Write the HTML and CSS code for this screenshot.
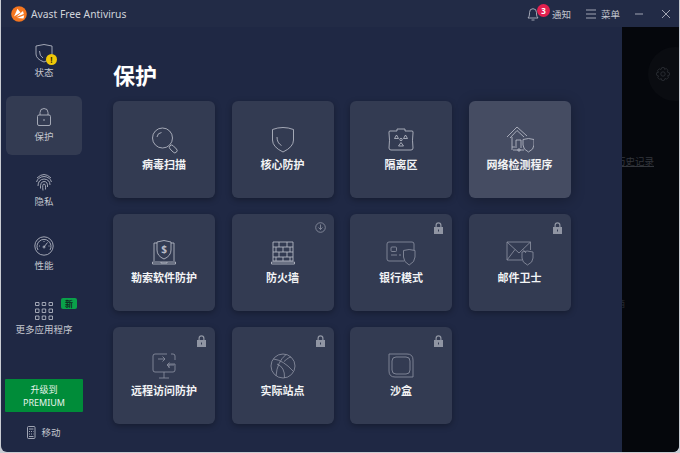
FILE: index.html
```html
<!DOCTYPE html>
<html lang="zh-CN">
<head>
    <meta charset="UTF-8">
    <title>Avast Free Antivirus</title>
    <link rel="stylesheet" href="styles.css">
</head>
<body>
    <div class="window">
        <header class="titlebar">
            <svg class="logo" width="16" height="16" viewBox="0 0 16 16">
                <circle cx="8" cy="8" r="7.8" fill="#f5761f"/>
                <path d="M3 10.500 L6.500 2.800 L9.500 6.500 Z M5 11 L12 5 L12.800 8 Z M6 12 L13.200 9.200 L12.500 12.500 Z" fill="#fff"/>
            </svg>
            <span class="app-name">Avast Free Antivirus</span>
            <div class="bar-actions">
                <div class="notify">
                    <svg class="line" width="14" height="16" viewBox="0 0 14 16">
                        <path d="M2 12 Q3.500 10.500 3.500 8 V6.500 A3.500 3.800 0 0 1 10.500 6.500 V8 Q10.500 10.500 12 12 Z M5.500 14 H8.500"/>
                    </svg>
                    <span class="notify-count">3</span>
                    <span class="bar-label">通知</span>
                </div>
                <div class="menu">
                    <svg class="line" width="10" height="10" viewBox="0 0 10 10">
                        <path d="M0 1 H10 M0 5 H10 M0 9 H10"/>
                    </svg>
                    <span class="bar-label">菜单</span>
                </div>
                <svg class="line win-btn" width="9" height="10" viewBox="0 0 9 10"><path d="M0 5 H8"/></svg>
                <svg class="line win-btn" width="10" height="10" viewBox="0 0 10 10"><path d="M1 1 L9 9 M9 1 L1 9"/></svg>
            </div>
        </header>

        <div class="main">
            <nav class="sidebar">
                <div class="nav-item">
                    <svg class="line" width="20" height="20" viewBox="0 0 20 20">
                        <path d="M2 3 Q10 0 18 3 V11 Q18 16 10 19 Q2 16 2 11 Z M5.500 8 Q5.500 13 9 15"/>
                    </svg>
                    <span class="warn-badge">!</span>
                    <span class="nav-label">状态</span>
                </div>
                <div class="nav-item active">
                    <svg class="line" width="20" height="20" viewBox="0 0 20 20">
                        <rect x="3.500" y="8" width="13" height="10.500" rx="1.500"/>
                        <path d="M6 8 V5.500 A4 4 0 0 1 14 5.500 V8 M10 12 V14"/>
                    </svg>
                    <span class="nav-label">保护</span>
                </div>
                <div class="nav-item">
                    <svg class="line" width="20" height="20" viewBox="0 0 20 20">
                        <path d="M3 6 Q10 -1 17 6 M2.500 10 Q4 5 10 4.500 Q16 5 17.500 10 M4 14 Q4 7.500 10 7 Q16 7.500 16 13 M6.500 16.500 Q6 9.500 10 9.500 Q14 9.500 13.500 15 M9 18.500 Q8 12 10 12 Q12 12 11.500 17.500"/>
                    </svg>
                    <span class="nav-label">隐私</span>
                </div>
                <div class="nav-item">
                    <svg class="line" width="20" height="20" viewBox="0 0 20 20">
                        <circle cx="10" cy="10" r="9.200"/>
                        <path d="M4 14 A7 7 0 1 1 16 14 M10 11 L13.500 6.500 M10 5 V6 M5 10 H6 M14.500 10 H15.500"/>
                        <circle cx="10" cy="11" r="1"/>
                    </svg>
                    <span class="nav-label">性能</span>
                </div>
                <div class="nav-item">
                    <svg class="line" width="18" height="18" viewBox="0 0 18 18">
                        <path d="M.5 .5 H4 V3.500 H.5 Z M7.200 .5 H10.700 V3.500 H7.200 Z M14 .5 H17.500 V3.500 H14 Z M.5 7 H4 V10.500 H.5 Z M7.200 7 H10.700 V10.500 H7.200 Z M14 7 H17.500 V10.500 H14 Z M.5 14 H4 V17.500 H.5 Z M7.200 14 H10.700 V17.500 H7.200 Z M14 14 H17.500 V17.500 H14 Z"/>
                    </svg>
                    <span class="new-badge">新</span>
                    <span class="nav-label">更多应用程序</span>
                </div>
                <div class="upgrade">升级到<br>PREMIUM</div>
                <div class="mobile">
                    <svg class="line" width="9" height="13" viewBox="0 0 9 13">
                        <rect x=".5" y=".5" width="7.500" height="12" rx="1"/>
                        <path d="M2 3 H6.500 M2 5.500 H3 M4 5.500 H5 M6 5.500 H6.500 M2 8 H3 M4 8 H5 M6 8 H6.500 M2 10.500 H6.500"/>
                    </svg>
                    <span class="nav-label">移动</span>
                </div>
            </nav>

            <section class="content">
                <h1>保护</h1>
                <div class="cards">
                    <div class="card">
                        <svg class="line" width="28" height="28" viewBox="0 0 28 28">
                            <circle cx="12.500" cy="12" r="10"/>
                            <path d="M7 11 Q7.500 7 11.500 6.500"/>
                            <rect x="21" y="18.500" width="4.500" height="9" rx="2.200" transform="rotate(-45 23.200 23)"/>
                        </svg>
                        <span class="card-label">病毒扫描</span>
                    </div>
                    <div class="card">
                        <svg class="line" width="28" height="28" viewBox="0 0 28 28">
                            <path d="M3.500 3.500 Q14 -.5 24.500 3.500 V14 Q24.500 21 14 26 Q3.500 21 3.500 14 Z M8 11 Q8 17 12.500 19.500"/>
                        </svg>
                        <span class="card-label">核心防护</span>
                    </div>
                    <div class="card">
                        <svg class="line" width="28" height="28" viewBox="0 0 28 28">
                            <path d="M3 5 H10 V3 H18 V5 H25 Q26.500 5 26 7 Q25 14 26 22 Q26 24 24 24 H4 Q2 24 2 22 Q3 14 2 7 Q1.500 5 3 5 Z"/>
                            <path d="M7.500 12.500 L9.500 9 L11.500 12.500 Z M16.500 12.500 L18.500 9 L20.500 12.500 Z M11.500 20 L14 16.500 L16.500 20 Z"/>
                            <circle cx="14" cy="13.500" r="1.200"/>
                        </svg>
                        <span class="card-label">隔离区</span>
                    </div>
                    <div class="card hover">
                        <svg class="line" width="28" height="28" viewBox="0 0 28 28">
                            <path d="M1 11 L11 1 L21 10 M4 12 L11 4.500 L18 11 M6 11 V24 M11 21 H6 M10 14 H15 V22 M10 14 V20 M7 24 H18"/>
                            <circle cx="13" cy="24" r="1.200"/>
                            <path d="M17 13.500 Q22.500 11.500 28 13.500 V19 Q28 23.500 22.500 26 Q17 23.500 17 19 Z"/>
                        </svg>
                        <span class="card-label">网络检测程序</span>
                    </div>

                    <div class="card">
                        <svg class="line" width="28" height="28" viewBox="0 0 28 28">
                            <path d="M7 4 H4 V22 M21 4 H24 V22 M2.500 23 H25.500 V25 H2.500 Z M11 23 V24 H17 V23"/>
                            <path d="M7 3 Q14 0 21 3 V11 Q21 17 14 20 Q7 17 7 11 Z"/>
                            <text class="dollar" x="14" y="14">$</text>
                        </svg>
                        <span class="card-label">勒索软件防护</span>
                    </div>
                    <div class="card">
                        <svg class="line" width="28" height="28" viewBox="0 0 28 28">
                            <path d="M4 3 H24 V22 H4 Z M4 8 H24 M4 13 H24 M4 18 H24 M10 3 V8 M18 3 V8 M7 8 V13 M14 8 V13 M21 8 V13 M10 13 V18 M18 13 V18 M7 18 V22 M14 18 V22 M21 18 V22"/>
                            <path d="M2.500 23 H25.500 V25 H2.500 Z"/>
                        </svg>
                        <span class="card-label">防火墙</span>
                        <svg class="dim corner" width="11" height="11" viewBox="0 0 11 11">
                            <circle cx="5.500" cy="5.500" r="4.800"/>
                            <path d="M5.500 2.500 V7.500 M3.500 5.500 L5.500 7.500 L7.500 5.500"/>
                        </svg>
                    </div>
                    <div class="card">
                        <svg class="dim" width="30" height="28" viewBox="0 0 30 28">
                            <path d="M18 22 H3 Q1 22 1 20 V5 Q1 3 3 3 H26 Q28 3 28 5 V11"/>
                            <rect x="5" y="8" width="5.500" height="4.500" rx="1"/>
                            <path d="M5 16 H11 M13 16 H15"/>
                            <path d="M17.500 11.500 Q23 9.500 29 11.500 V18 Q29 23 23.200 26 Q17.500 23 17.500 18 Z"/>
                        </svg>
                        <span class="card-label">银行模式</span>
                        <svg class="lock-icon corner" width="11" height="12" viewBox="0 0 11 12"><path d="M1 5 H2.500 V3.500 A3 3.200 0 0 1 8.500 3.500 V5 H10 V12 H1 Z M3.700 5 H7.300 V3.500 A1.800 2 0 0 0 3.700 3.500 Z M5 7.500 V9.500 H6 V7.500 Z" fill-rule="evenodd"/></svg>
                    </div>
                    <div class="card">
                        <svg class="dim" width="28" height="28" viewBox="0 0 28 28">
                            <path d="M16 21 H1 V3 H24.500 V11 M1 3 L13 14 L24.500 3 M1 21 L9 10.500 M17 10.500 L20 14"/>
                            <path d="M16 13 Q21 11 27 13 V19 Q27 23.500 21.500 26 Q16 23.500 16 19 Z"/>
                        </svg>
                        <span class="card-label">邮件卫士</span>
                        <svg class="lock-icon corner" width="11" height="12" viewBox="0 0 11 12"><path d="M1 5 H2.500 V3.500 A3 3.200 0 0 1 8.500 3.500 V5 H10 V12 H1 Z M3.700 5 H7.300 V3.500 A1.800 2 0 0 0 3.700 3.500 Z M5 7.500 V9.500 H6 V7.500 Z" fill-rule="evenodd"/></svg>
                    </div>

                    <div class="card">
                        <svg class="dim" width="28" height="28" viewBox="0 0 28 28">
                            <path d="M17 2 H5 Q3 2 3 4 V18 Q3 20 5 20 H23 Q25 20 25 18 V12 H19 V16 M25 8 V4 Q25 2 23 2 H21 M14 20 V26 M9 26 H19"/>
                            <path d="M8 8 H15 M12.500 5.500 L15 8 L12.500 10.500 M24 14 H17 M19.500 11.500 L17 14 L19.500 16.500" transform="translate(0 -1)"/>
                        </svg>
                        <span class="card-label">远程访问防护</span>
                        <svg class="lock-icon corner" width="11" height="12" viewBox="0 0 11 12"><path d="M1 5 H2.500 V3.500 A3 3.200 0 0 1 8.500 3.500 V5 H10 V12 H1 Z M3.700 5 H7.300 V3.500 A1.800 2 0 0 0 3.700 3.500 Z M5 7.500 V9.500 H6 V7.500 Z" fill-rule="evenodd"/></svg>
                    </div>
                    <div class="card">
                        <svg class="dim" width="28" height="28" viewBox="0 0 28 28">
                            <circle cx="14" cy="14" r="12"/>
                            <path d="M4.500 7 Q14 8 24 19 M17 2.500 Q8 10 7 24 M8 12 Q16 15 15.500 26 M15 9.500 Q20 5 22 5"/>
                        </svg>
                        <span class="card-label">实际站点</span>
                        <svg class="lock-icon corner" width="11" height="12" viewBox="0 0 11 12"><path d="M1 5 H2.500 V3.500 A3 3.200 0 0 1 8.500 3.500 V5 H10 V12 H1 Z M3.700 5 H7.300 V3.500 A1.800 2 0 0 0 3.700 3.500 Z M5 7.500 V9.500 H6 V7.500 Z" fill-rule="evenodd"/></svg>
                    </div>
                    <div class="card">
                        <svg class="dim" width="28" height="28" viewBox="0 0 28 28">
                            <path d="M2 2 H20 Q26 2 26 8 V25 H8 Q2 25 2 19 Z"/>
                            <rect x="5" y="5" width="18" height="17" rx="4"/>
                        </svg>
                        <span class="card-label">沙盒</span>
                        <svg class="lock-icon corner" width="11" height="12" viewBox="0 0 11 12"><path d="M1 5 H2.500 V3.500 A3 3.200 0 0 1 8.500 3.500 V5 H10 V12 H1 Z M3.700 5 H7.300 V3.500 A1.800 2 0 0 0 3.700 3.500 Z M5 7.500 V9.500 H6 V7.500 Z" fill-rule="evenodd"/></svg>
                    </div>
                </div>
            </section>

            <aside class="side-panel">
                <div class="gear-circle">
                    <svg class="gear" width="14" height="14" viewBox="0 0 14 14">
                        <circle cx="7" cy="7" r="2.200"/>
                        <path d="M5.800 .6 H8.200 L8.600 2.400 L10.200 1.500 L12 3.300 L11.200 4.900 L13.400 5.800 V8.200 L11.600 8.700 L12.400 10.400 L10.600 12.200 L9 11.400 L8.200 13.400 H5.800 L5.300 11.600 L3.600 12.400 L1.800 10.600 L2.600 9 L.6 8.200 V5.800 L2.400 5.300 L1.600 3.600 L3.400 1.800 L5 2.600 Z"/>
                    </svg>
                </div>
                <a class="history">历史记录</a>
                <span class="clipped">箱</span>
            </aside>
        </div>
    </div>
</body>
</html>
```

FILE: styles.css
```css
html, body {
    margin: 0;
    height: 100%;
}
body {
    background-color: #c9ccd3;
    font-family: "Noto Sans", "Noto Sans CJK SC", sans-serif;
    overflow: hidden;
}
.window {
    height: 452px;
    margin: 0 1px;
    display: flex;
    flex-direction: column;
    background-color: #1f2844;
    border-radius: 0 0 6px 6px;
    overflow: hidden;
    color: #c4c7cf;
}
svg {
    display: block;
    flex: none;
}
.line, .dim, .gear {
    fill: none;
    stroke-width: 0.85;
}
.line {
    stroke: #b8bcc7;
}
.dim {
    stroke: #8a8f9f;
}

/* title bar */
.titlebar {
    height: 27px;
    flex: none;
    display: flex;
    align-items: center;
    padding-left: 10px;
    background-color: #222b46;
}
.logo {
    margin-right: 4px;
}
.app-name {
    font-size: 10.300px;
    color: #d0d3da;
}
.bar-actions {
    margin-left: auto;
    display: flex;
    align-items: center;
}
.notify, .menu {
    display: flex;
    align-items: center;
    position: relative;
}
.notify {
    margin-right: 15px;
}
.menu {
    margin-right: 15px;
}
.menu .line {
    margin-right: 5px;
}
.notify .line {
    margin-right: 12px;
}
.bar-label {
    font-size: 9.500px;
}
.notify-count {
    position: absolute;
    left: 11px;
    top: -2px;
    width: 13px;
    height: 13px;
    border-radius: 50%;
    background-color: #e3204f;
    color: #fff;
    font-size: 8px;
    font-weight: 700;
    line-height: 13px;
    text-align: center;
}
.win-btn {
    margin-right: 12px;
}
.win-btn:last-child {
    margin-left: 5px;
    margin-right: 8px;
}

/* sidebar */
.main {
    flex: 1;
    display: flex;
    min-height: 0;
}
.sidebar {
    width: 86px;
    flex: none;
    display: flex;
    flex-direction: column;
    align-items: center;
    padding: 4.500px 0 0;
    box-sizing: border-box;
    gap: 5.500px;
}
.nav-item {
    position: relative;
    width: 76px;
    height: 59px;
    display: flex;
    flex-direction: column;
    align-items: center;
    justify-content: center;
    gap: 3px;
    border-radius: 6px;
}
.nav-item.active {
    background-color: #333b52;
}
.nav-label {
    font-size: 9.500px;
    line-height: 14px;
    white-space: nowrap;
}
.warn-badge {
    position: absolute;
    left: 40px;
    top: 22px;
    width: 11px;
    height: 11px;
    border-radius: 50%;
    background-color: #f0c808;
    color: #3a3000;
    font-size: 8px;
    font-weight: 700;
    line-height: 11px;
    text-align: center;
}
.new-badge {
    position: absolute;
    left: 55px;
    top: 8px;
    width: 16px;
    height: 11px;
    border-radius: 2px;
    background-color: #0aa14a;
    color: #0f2a22;
    font-size: 8px;
    font-weight: 700;
    line-height: 11px;
    text-align: center;
}
.upgrade {
    width: 78px;
    height: 33px;
    margin-top: 24.500px;
    background-color: #008c39;
    border-radius: 1px;
    color: #e8f3ec;
    font-size: 9px;
    line-height: 13px;
    text-align: center;
    padding-top: 4px;
    box-sizing: border-box;
}
.mobile {
    display: flex;
    align-items: center;
    gap: 5px;
    margin-top: 8.500px;
}

/* protection cards */
.content {
    flex: 1;
    padding-left: 26px;
    min-width: 0;
}
h1 {
    margin: 0;
    padding-top: 31px;
    height: 43px;
    font-size: 22px;
    line-height: 34px;
    font-weight: 700;
    color: #fff;
    box-sizing: content-box;
}
.cards {
    display: grid;
    grid-template-columns: repeat(4, 102px);
    grid-auto-rows: 97px;
    column-gap: 16.500px;
    row-gap: 16px;
}
.card {
    position: relative;
    display: flex;
    flex-direction: column;
    align-items: center;
    padding-top: 25px;
    gap: 3px;
    box-sizing: border-box;
    background-color: #333b52;
    border-radius: 6px;
    box-shadow: 0 2px 6px rgba(0, 0, 0, 0.3);
}
.card.hover {
    background-color: #454c62;
    box-shadow: 0 2px 14px rgba(0, 0, 0, 0.3);
}
.card-label {
    font-size: 11px;
    line-height: 16px;
    font-weight: 700;
    color: #f2f3f5;
    white-space: nowrap;
}
.corner {
    position: absolute;
    top: 8px;
    right: 8px;
}
.lock-icon {
    fill: #9095a3;
}
.dollar {
    fill: #b8bcc7;
    stroke: none;
    font-size: 10px;
    font-weight: 700;
    text-anchor: middle;
}

/* dimmed panel on the right */
.side-panel {
    width: 57px;
    flex: none;
    background-color: #05070c;
    overflow: hidden;
    display: flex;
    flex-direction: column;
    align-items: flex-start;
}
.gear-circle {
    width: 54px;
    height: 54px;
    flex: none;
    box-sizing: border-box;
    margin: 20px 0 0 26px;
    padding-left: 8px;
    border-radius: 50%;
    background-color: #0a0c11;
    display: flex;
    align-items: center;
}
.gear {
    stroke: #2c2f35;
}
.history {
    margin: 54px 0 0 -6px;
    font-size: 9.500px;
    line-height: 14px;
    color: #33363c;
    text-decoration: underline;
    white-space: nowrap;
}
.clipped {
    margin: 128px 0 0 -6px;
    font-size: 9px;
    line-height: 14px;
    color: #26292f;
}
```
